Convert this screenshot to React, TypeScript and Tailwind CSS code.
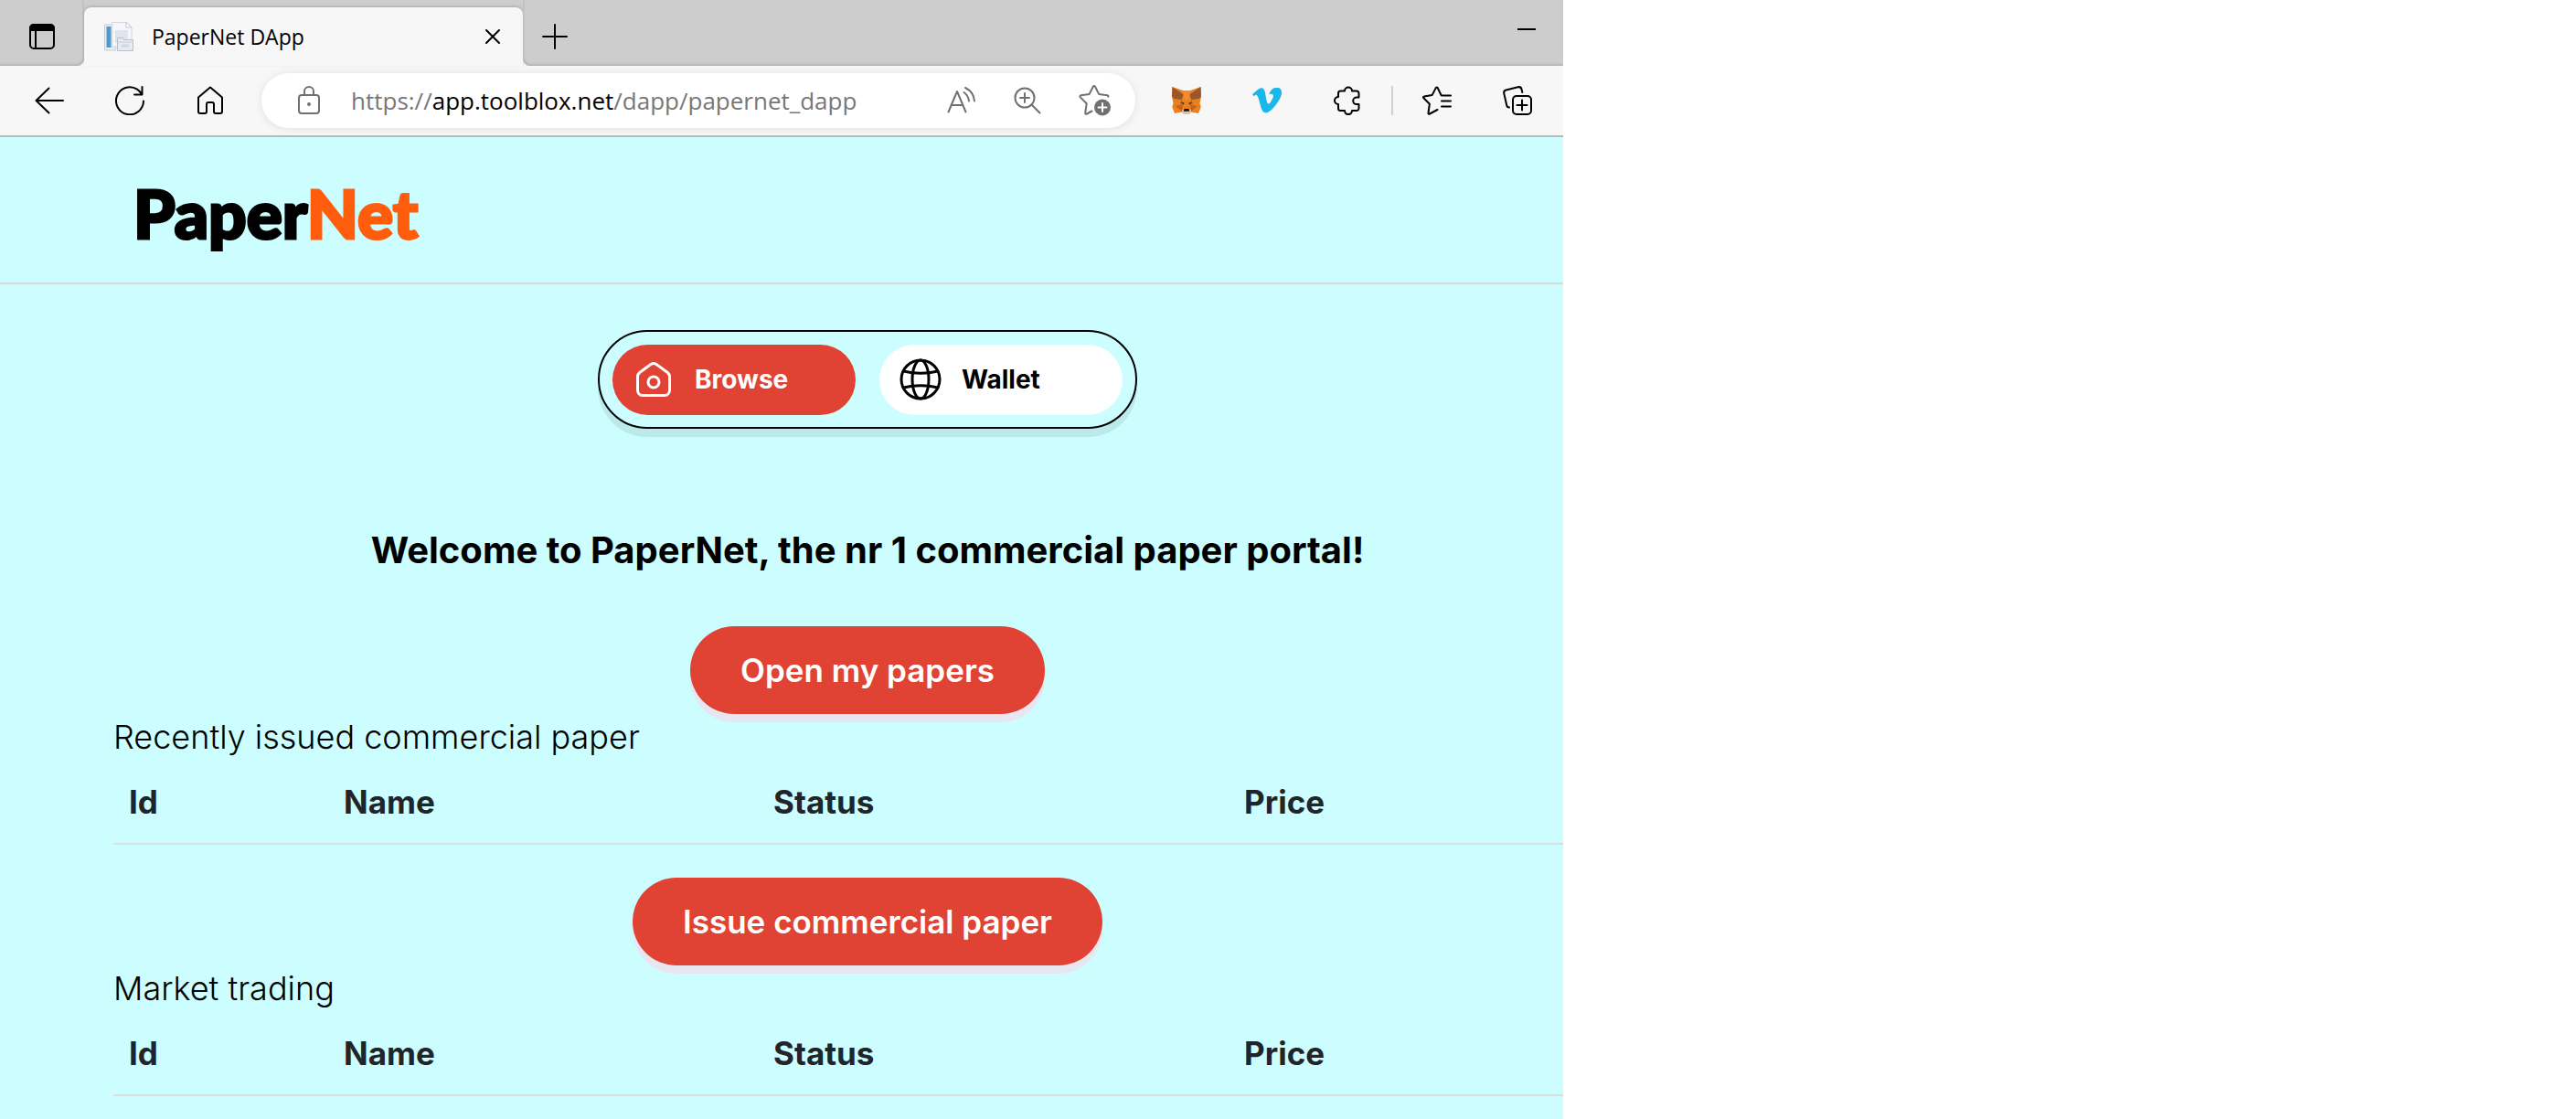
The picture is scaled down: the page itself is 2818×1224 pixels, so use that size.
import React from "react";

type IconProps = { label: string; className?: string; children: React.ReactNode };

const line = {
  fill: "none",
  stroke: "currentColor",
  strokeWidth: 2,
  strokeLinecap: "round" as const,
  strokeLinejoin: "round" as const,
  "aria-hidden": true,
};

const TabActionsIcon = () => (
  <svg viewBox="0 0 28 28" className="size-7" {...line}>
    <rect x="1" y="1" width="26" height="26" rx="4" />
    <path d="M1 7V5a4 4 0 0 1 4-4h18a4 4 0 0 1 4 4v2Z" fill="currentColor" />
    <path d="M7 8v19" />
  </svg>
);

const FaviconIcon = () => (
  <svg viewBox="0 0 32 32" className="size-8" aria-hidden="true">
    <path d="M.5 3h12v28H.5Z" fill="#e9eef2" stroke="#c3cbd3" />
    <path d="M2.500 5h5v23h-5Z" fill="#4e9acb" />
    <path d="M8.500 .5H24l6 5.500V27H8.500Z" fill="#f4f6f9" stroke="#d3d6dd" />
    <path d="M24 .5V6h6Z" fill="#fff" stroke="#c0c5ce" />
    <path d="M12 9h14v14H12Z" fill="#dfe4ec" />
    <path d="M14.500 31.500v-14h6l1 2h10v12Z" fill="#e8eaf2" stroke="#b9bfca" />
    <path d="M14.500 22h17" stroke="#c9cdd6" />
    <path d="M19 24.500h8v3h-8Z" fill="#cfd5e2" />
  </svg>
);

const CloseIcon = () => (
  <svg viewBox="0 0 18 18" className="size-[18px]" {...line}>
    <path d="m2 2 14 14M16 2 2 16" />
  </svg>
);

const PlusIcon = () => (
  <svg viewBox="0 0 28 28" className="size-7" {...line}>
    <path d="M14 1v26M1 14h26" />
  </svg>
);

const BackIcon = () => (
  <svg viewBox="0 0 32 32" className="size-8" {...line}>
    <path d="M15.500 2.500 1.500 16l14 13.500M1.500 16H31" />
  </svg>
);

const RefreshIcon = () => (
  <svg viewBox="0 0 32 32" className="size-8" {...line}>
    <path d="M31 16.500A15 15 0 1 1 24 3.600c2 1.300 3.500 3 4.800 5M29.500 1v8.500H21" />
  </svg>
);

const HomeIcon = () => (
  <svg viewBox="0 0 32 32" className="size-8" {...line}>
    <path d="M3 12.500 16 1.500l13 11V28a2 2 0 0 1-2 2h-5a2 2 0 0 1-2-2v-8a2 2 0 0 0-2-2h-4a2 2 0 0 0-2 2v8a2 2 0 0 1-2 2H5a2 2 0 0 1-2-2Z" />
  </svg>
);

const LockIcon = () => (
  <svg viewBox="0 0 24 32" className="h-8 w-6" {...line}>
    <rect x="1" y="10" width="22" height="20" rx="3" />
    <path d="M7 10V6a5 5 0 0 1 10 0v4" />
    <circle cx="12" cy="20" r="1" fill="currentColor" />
  </svg>
);

const ReadAloudIcon = () => (
  <svg viewBox="0 0 32 32" className="size-8" {...line}>
    <path d="M1.500 28.500 11 6l9.500 22.500M4.800 21h12.500" />
    <path d="M18.500 7c3 2 5 5.500 5.500 9.500M20 2c6 3 9.500 7.500 10 14.500" />
  </svg>
);

const ZoomInIcon = () => (
  <svg viewBox="0 0 32 32" className="size-8" {...line}>
    <circle cx="13" cy="13" r="10.500" />
    <path d="m20.500 20.500 9 9M13 8v10M8 13h10" />
  </svg>
);

const StarAddIcon = () => (
  <svg viewBox="0 0 36 36" className="size-9" {...line}>
    <path d="M14.500 29.500 9 32.500c-1 .5-2 0-1.800-1.200l1.500-10L1.800 14.400c-.8-.8-.4-1.900.8-2.100l9.100-1.400 4.100-8.200c.5-1 1.700-1 2.200 0l4.100 8.200 9.200 1.400c.8.200 1.200.8 1 1.500" />
    <circle cx="26" cy="25.500" r="9" fill="currentColor" stroke="none" />
    <path d="M26 21v9M21.500 25.500h9" stroke="#fff" />
  </svg>
);

const FoxIcon = () => (
  <svg viewBox="0 0 32 30" className="h-[30px] w-8" aria-hidden="true">
    <path d="M.5 0 12 4h8L31.500 0 32 11l-1.500 7 1.300 4L29 29l-8-1.500L18.500 30h-5L11 27.500 3 29 .2 22l1.300-4L0 11Z" fill="#e8821e" />
    <path d="M.5 0 13 8.500 10.500 14l-8-1L0 10.500ZM31.500 0 19 8.500l2.500 5.500 8-1 2.500-2.500Z" fill="#99552b" />
    <path d="m10.500 14 3 5-4.500-.5ZM21.500 14l-3 5 4.500-.5ZM4 21l8-2-1 8ZM28 21l-8-2 1 8Z" fill="#c8601c" />
    <path d="M12 4h8l-1 9-3 2-3-2Z" fill="#f6892b" />
    <path d="m9.500 17 4 .5-.5 2ZM22.500 17l-4 .5.5 2Z" fill="#3b2b25" />
    <path d="m11 25.500 2.500-1.500h5l2.500 1.500-.5 3-2 1.500h-5l-2-1.500Z" fill="#d7c1b3" />
    <path d="M13.500 24h5l.8 2.800h-6.600Z" fill="#161616" />
  </svg>
);

const VimeoIcon = () => (
  <svg viewBox="0 2 24 20.500" className="h-7 w-8" fill="#1ab7ea" aria-hidden="true">
    <path d="M23.977 6.416c-.105 2.338-1.739 5.543-4.894 9.609-3.268 4.247-6.026 6.370-8.290 6.370-1.409 0-2.578-1.294-3.553-3.881L5.322 11.400C4.603 8.816 3.834 7.522 3.010 7.522c-.179 0-.806.378-1.881 1.132L0 7.197a315.065 315.065 0 0 0 3.501-3.128C5.080 2.701 6.266 1.984 7.055 1.910c1.867-.18 3.016 1.100 3.447 3.838.465 2.953.789 4.789.971 5.507.539 2.450 1.131 3.674 1.776 3.674.502 0 1.256-.796 2.265-2.385 1.004-1.589 1.540-2.797 1.612-3.628.144-1.371-.395-2.061-1.614-2.061-.574 0-1.167.121-1.777.391 1.186-3.868 3.434-5.757 6.762-5.637 2.473.060 3.628 1.664 3.493 4.797z" />
  </svg>
);

const PuzzleIcon = () => (
  <svg viewBox="0 0 32 32" className="size-8" {...line}>
    <path d="M6 8a2.500 2.500 0 0 1 2.500-2.500H13a4 4 0 0 1 8 0h5A2.500 2.500 0 0 1 28.500 8v4.500H26a3.800 3.800 0 0 0 0 7.600h2.500v4.500a2.500 2.500 0 0 1-2.500 2.500h-5a4 4 0 0 1-8 0H8.500A2.500 2.500 0 0 1 6 24.600V20a4 4 0 0 1 0-8Z" />
  </svg>
);

const FavoritesIcon = () => (
  <svg viewBox="0 0 32 32" className="size-8" {...line}>
    <path d="M16.500 26 8 30.500c-1 .5-1.600 0-1.500-1l1.400-9.800-6.500-6.500c-.7-.7-.4-1.500.6-1.700l8.600-1.400 4.200-8c.5-.9 1.400-.9 1.900 0L20.500 10M21 10.500h10M21 16.500h10M21 22.500h10" />
  </svg>
);

const CollectionsIcon = () => (
  <svg viewBox="0 0 32 32" className="size-8" {...line}>
    <rect x="11" y="11" width="20" height="20" rx="4" />
    <path d="M21 15.500v11M15.500 21h11" />
    <path d="M7 23.500c-1.500 0-2.500-1-2.800-2.500L1.300 8.300C.9 6.500 1.700 5 3.500 4.500l13-3.200c2-.5 3.500.3 4 2.200l.8 3.500" />
  </svg>
);

const BrowseIcon = () => (
  <svg viewBox="0 0 38 38" className="h-[38px] w-[38px]" {...line} strokeWidth={3}>
    <path d="M1.500 16c0-2 .7-3.300 2.200-4.500L16 2.500c2-1.400 4-1.400 6 0l12.300 9c1.500 1.200 2.200 2.500 2.200 4.500v14.500c0 3.500-2 6-5.500 6H7c-3.500 0-5.500-2.500-5.500-6Z" />
    <circle cx="19" cy="22" r="6" />
  </svg>
);

const GlobeIcon = () => (
  <svg viewBox="0 0 46 46" className="h-[46px] w-[46px]" {...line} strokeWidth={3}>
    <circle cx="23" cy="23" r="21" />
    <ellipse cx="23" cy="23" rx="9" ry="21" />
    <path d="M4.500 14c12 3 25 3 37 0M4.500 32c12-3 25-3 37 0" />
  </svg>
);

const IconButton = ({ label, className = "", children }: IconProps) => (
  <button type="button" aria-label={label} className={`grid shrink-0 place-items-center ${className}`}>
    {children}
  </button>
);

function TabStrip() {
  return (
    <div className="flex h-[72px] bg-[#f7f7f7]">
      <div className="w-[92px] rounded-br-lg bg-[#cdcdcd] pt-2 shadow-[inset_-1px_-2px_3px_-1px_#a8a8a8]">
        <IconButton label="Tab actions" className="h-16 w-full">
          <TabActionsIcon />
        </IconButton>
      </div>
      <div className="w-[480px] bg-[#cdcdcd] pt-2">
        <div className="flex h-16 items-center rounded-t-lg bg-[#f7f7f7] pr-6 pl-[22px] shadow-[0_-1px_3px_#00000030]">
          <FaviconIcon />
          <span className="ml-5 flex-1 text-[23px] leading-8">PaperNet DApp</span>
          <IconButton label="Close tab">
            <CloseIcon />
          </IconButton>
        </div>
      </div>
      <div className="flex flex-1 justify-between rounded-bl-lg bg-[#cdcdcd] pt-2 shadow-[inset_1px_-2px_3px_-1px_#a8a8a8]">
        <IconButton label="New tab" className="h-16 w-[70px]">
          <PlusIcon />
        </IconButton>
        <IconButton label="Minimize" className="h-12 w-20">
          <span className="h-0.5 w-5 bg-black" />
        </IconButton>
      </div>
    </div>
  );
}

function Toolbar() {
  return (
    <div className="flex h-[78px] items-center border-b-2 border-[#bababa] bg-[#f7f7f7] pr-[34px] pl-[38px]">
      <div className="flex items-center gap-14">
        <IconButton label="Back"><BackIcon /></IconButton>
        <IconButton label="Refresh"><RefreshIcon /></IconButton>
        <IconButton label="Home"><HomeIcon /></IconButton>
      </div>
      <div className="ml-10 flex h-[60px] min-w-0 flex-1 items-center rounded-full bg-white pr-[26px] pl-10 text-[#707070] shadow-[0_1px_10px_#00000018]">
        <LockIcon />
        <p className="ml-[34px] flex-1 text-[26px] leading-9 whitespace-nowrap text-[#777777]">
          https://<span className="text-black">app.toolblox.net</span>/dapp/papernet_dapp
        </p>
        <div className="flex items-center gap-10">
          <IconButton label="Read aloud"><ReadAloudIcon /></IconButton>
          <IconButton label="Zoom"><ZoomInIcon /></IconButton>
          <IconButton label="Add to favorites"><StarAddIcon /></IconButton>
        </div>
      </div>
      <div className="ml-10 flex items-center gap-14">
        <IconButton label="MetaMask"><FoxIcon /></IconButton>
        <IconButton label="Vimeo"><VimeoIcon /></IconButton>
        <IconButton label="Extensions"><PuzzleIcon /></IconButton>
      </div>
      <div className="mr-8 ml-8 h-8 w-0.5 bg-[#cfcfcf]" />
      <div className="flex items-center gap-14">
        <IconButton label="Favorites"><FavoritesIcon /></IconButton>
        <IconButton label="Collections"><CollectionsIcon /></IconButton>
      </div>
    </div>
  );
}

function PaperSection({ action, title }: { action: string; title: string }) {
  return (
    <section className="mb-9">
      <button
        type="button"
        className="mx-auto block h-24 rounded-full bg-[#e04333] px-[55px] text-[35px] font-semibold text-white shadow-[0_9px_0_#e8e6f0]"
      >
        {action}
      </button>
      <h2 className="text-[36px] leading-[51px] font-light">{title}</h2>
      <table className="w-full table-fixed text-left text-[35px] leading-[56px] text-[#212529]">
        <colgroup>
          <col className="w-[235px]" />
          <col className="w-[470px]" />
          <col className="w-[515px]" />
          <col />
        </colgroup>
        <thead>
          <tr>
            {["Id", "Name", "Status", "Price"].map((name) => (
              <th key={name} scope="col" className="border-b-2 border-[#dcdfe2] px-[17px] py-[17px] font-bold">
                {name}
              </th>
            ))}
          </tr>
        </thead>
      </table>
    </section>
  );
}

export default function App() {
  return (
    <div className="min-h-screen bg-white">
      <div className="flex min-h-screen w-full max-w-[1710px] flex-col overflow-hidden bg-[#ccfeff] text-black">
        <div className="font-['Open_Sans',sans-serif]">
          <TabStrip />
          <Toolbar />
        </div>
        <div className="w-[111%] font-['Inter',sans-serif]">
          <header className="flex h-[161px] items-center border-b-2 border-[#d9d9d9] px-[146px] pt-1.5">
            <a href="#" className="font-['Lato',sans-serif] text-[73px] leading-[88px] font-black [-webkit-text-stroke:3px_currentColor]">
              Paper<span className="text-[#ff5d0d]">Net</span>
            </a>
          </header>
          <main className="px-[124px] pt-[50px]">
            <nav className="mx-auto flex h-[108px] w-[590px] items-center justify-between rounded-full border-2 border-black px-3.5 text-[28px] font-bold shadow-[0_9px_0_#bce9e9]">
              <button type="button" className="flex h-[77px] w-[266px] items-center gap-[26px] rounded-full bg-[#e04333] pl-[26px] text-white">
                <BrowseIcon />
                Browse
              </button>
              <button type="button" className="flex h-[77px] w-[266px] items-center gap-[22px] rounded-full bg-white pl-[22px]">
                <GlobeIcon />
                Wallet
              </button>
            </nav>
            <h1 className="mt-[103px] mb-[53px] text-center text-[40px] leading-[60px] font-bold">
              Welcome to PaperNet, the nr 1 commercial paper portal!
            </h1>
            <PaperSection action="Open my papers" title="Recently issued commercial paper" />
            <PaperSection action="Issue commercial paper" title="Market trading" />
          </main>
        </div>
      </div>
    </div>
  );
}
